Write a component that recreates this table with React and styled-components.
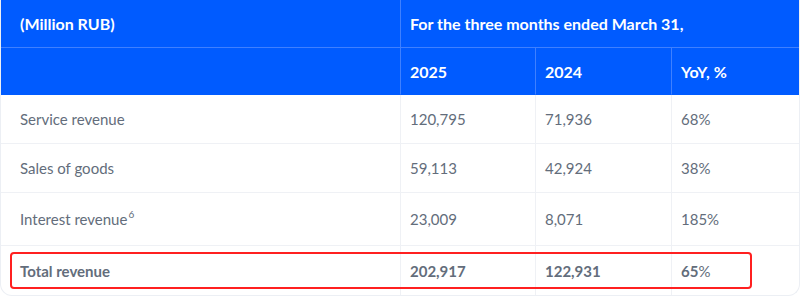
import React from 'react';
import styled, {createGlobalStyle} from 'styled-components';

const GlobalStyle = createGlobalStyle`
  html, body {
    margin: 0;
    padding: 0;
    background: #ffffff;
  }
  body {
    font-family: Lato, "Open Sans", sans-serif;
  }
`;

// Styled components
const TableWrap = styled.div`
  position: relative;
  width: 800px;
  height: 296px;
  overflow: hidden;
`;

const Grid = styled.div`
  display: grid;
  grid-template-columns: 400px 135px 136px 1fr;
  border: 1px solid #eceff4;
  border-top: none;
  border-radius: 0 0 12px 12px;
  box-sizing: border-box;
  width: 800px;
  overflow: hidden;
`;

const HeadCell = styled.div`
  background-color: #005bff;
  color: #ffffff;
  font-weight: 700;
  font-size: 16px;
  height: ${props => (props.top ? '47px' : '46px')};
  display: flex;
  align-items: center;
  padding-left: ${props => (props.first ? '19px' : '9px')};
  grid-column: ${props => props.span || 'auto'};
  border-right: ${props => (props.last ? 'none' : '1px solid #3f80ff')};
  border-bottom: ${props => (props.top ? '1px solid #3f80ff' : '1px solid #005bff')};
`;

const BodyCell = styled.div`
  color: #636d7b;
  font-size: 15px;
  font-weight: ${props => (props.bold ? 700 : 400)};
  height: ${props => props.h}px;
  display: flex;
  align-items: center;
  padding-left: ${props => (props.first ? '19px' : '9px')};
  border-right: ${props => (props.last ? 'none' : '1px solid #eff1f5')};
  border-bottom: ${props => (props.end ? 'none' : '1px solid #eff1f5')};

  sup {
    font-size: 10px;
    margin-left: 1px;
    align-self: flex-start;
    margin-top: 15px;
  }
`;

const Pct = styled.span`
  font-weight: 400;
`;

const Highlight = styled.div`
  position: absolute;
  left: 10px;
  top: 252px;
  width: 742px;
  height: 37px;
  border: 2px solid #ff2020;
  border-radius: 4px;
  box-sizing: border-box;
  pointer-events: none;
`;

const rows = [
  {label: 'Service revenue', a: '120,795', b: '71,936', pct: '68', h: 48},
  {label: 'Sales of goods', a: '59,113', b: '42,924', pct: '38', h: 48},
  {label: 'Interest revenue', sup: '6', a: '23,009', b: '8,071', pct: '185', h: 52},
  {label: 'Total revenue', a: '202,917', b: '122,931', pct: '65', h: 49, bold: true, end: true}
];

const App = () => (
  <>
    <GlobalStyle />
    <TableWrap>
      <Grid>
        <HeadCell top first>(Million RUB)</HeadCell>
        <HeadCell top last span="2 / 5">
          For the three months ended March 31,
        </HeadCell>
        <HeadCell first />
        <HeadCell>2025</HeadCell>
        <HeadCell>2024</HeadCell>
        <HeadCell last>YoY, %</HeadCell>
        {rows.map(row => (
          <React.Fragment key={row.label}>
            <BodyCell first h={row.h} bold={row.bold} end={row.end}>
              {row.label}
              {row.sup && <sup>{row.sup}</sup>}
            </BodyCell>
            <BodyCell h={row.h} bold={row.bold} end={row.end}>
              {row.a}
            </BodyCell>
            <BodyCell h={row.h} bold={row.bold} end={row.end}>
              {row.b}
            </BodyCell>
            <BodyCell last h={row.h} bold={row.bold} end={row.end}>
              {row.pct}
              <Pct>%</Pct>
            </BodyCell>
          </React.Fragment>
        ))}
      </Grid>
      <Highlight />
    </TableWrap>
  </>
);

export default App;
